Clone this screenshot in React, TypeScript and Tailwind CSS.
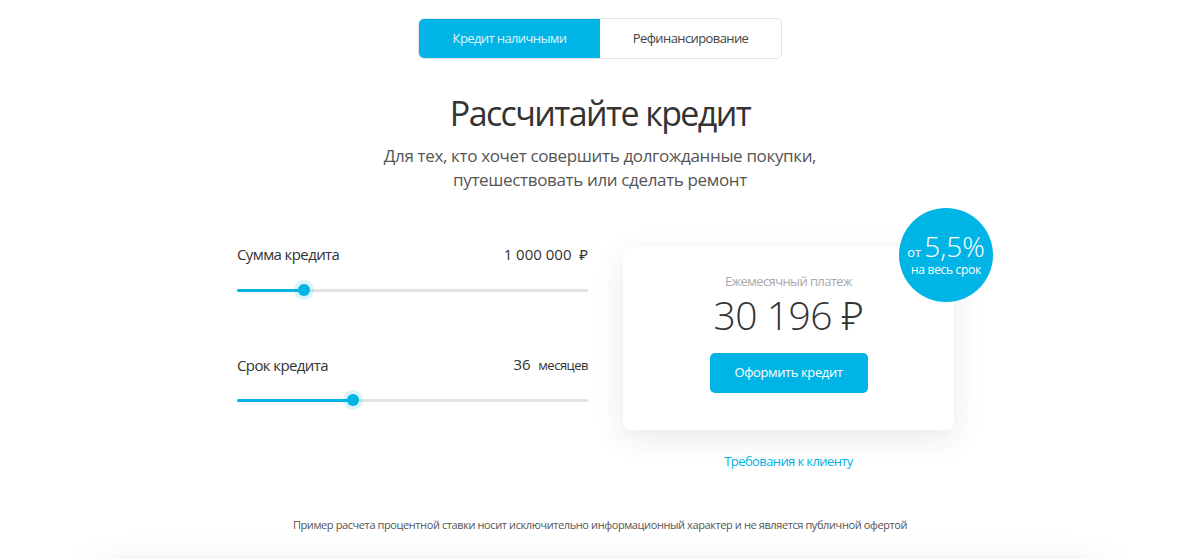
import { FC } from 'react';

const font = { fontFamily: '"Open Sans", "Noto Sans", sans-serif' };

interface SliderProps {
  percent: number;
}

const Slider: FC<SliderProps> = ({ percent }) => {
  return (
    <div className="relative h-5 w-full">
      <div className="absolute left-0 right-0 top-[9px] h-[3px] rounded-full bg-[#e2e2e2]" />
      <div
        className="absolute left-0 top-[9px] h-[3px] rounded-full bg-[#00b4e6]"
        style={{ width: `${percent}%` }}
      />
      <div
        className="absolute top-0 h-5 w-5 -translate-x-1/2 rounded-full bg-[#00b4e6]/15"
        style={{ left: `${percent}%` }}
      >
        <div className="absolute left-[4px] top-[4px] h-3 w-3 rounded-full bg-[#00b4e6]" />
      </div>
    </div>
  );
};

const App: FC = () => {
  return (
    <div className="w-full min-h-[559px] overflow-hidden bg-white text-[#333]" style={font}>
      <div className="flex flex-col items-center pt-[18px]">
        <div className="flex h-[41px] w-[364px] overflow-hidden rounded-md border border-[#e3e3e3]">
          <div className="flex flex-1 items-center justify-center bg-[#00b4e6] text-[13px] tracking-[-0.6px] text-white/85">
            Кредит наличными
          </div>
          <div className="flex flex-1 items-center justify-center bg-white text-[13px] tracking-[-0.6px] text-[#444]">
            Рефинансирование
          </div>
        </div>

        <h1 className="mt-[31px] text-[34px] leading-[46px] tracking-[-1.6px] text-[#333]">
          Рассчитайте кредит
        </h1>
        <p className="mt-[8px] text-center text-[17px] leading-[24px] tracking-[-0.35px] text-[#555]">
          Для тех, кто хочет совершить долгожданные покупки,
          <br />
          путешествовать или сделать ремонт
        </p>
      </div>

      <div className="mx-auto mt-[52px] flex w-[726px] gap-[35px]">
        <div className="w-[351px]">
          <div className="flex items-center justify-between leading-5">
            <span className="text-[15px] tracking-[-0.6px] text-[#333]">Сумма кредита</span>
            <span className="text-[15px] text-[#333]">1 000 000&nbsp; ₽</span>
          </div>
          <div className="mt-[16px]">
            <Slider percent={19} />
          </div>

          <div className="mt-[54px] flex items-center justify-between leading-5">
            <span className="text-[15px] tracking-[-0.6px] text-[#333]">Срок кредита</span>
            <span className="text-[15px] text-[#333]">
              36&nbsp; <span className="text-[13px] tracking-[-0.5px]">месяцев</span>
            </span>
          </div>
          <div className="mt-[15px]">
            <Slider percent={33} />
          </div>
        </div>

        <div className="flex w-[331px] flex-col items-center">
          <div className="relative mt-[3px] w-full rounded-lg bg-white pb-[37px] pt-[25px] shadow-[0_8px_30px_rgba(30,40,80,0.10)]">
            <div className="flex flex-col items-center">
              <span className="text-[13px] leading-[18px] tracking-[-0.6px] text-[#a9a9a9]">Ежемесячный платеж</span>
              <span className="mt-[1px] text-[39px] font-light leading-[48px] tracking-[-0.5px] text-[#333]">
                30 196 ₽
              </span>
              <button className="mt-[14px] h-10 w-[158px] rounded-[5px] bg-[#00b4e6] text-[13px] tracking-[-0.4px] text-white">
                Оформить кредит
              </button>
            </div>
            <div className="absolute left-[276px] top-[-39px] flex h-[94px] w-[94px] flex-col items-center justify-center rounded-full bg-[#00b4e6] text-white">
              <div className="flex items-baseline leading-none">
                <span className="mr-[3px] text-[13px]">от</span>
                <span className="text-[28px] font-light">5,5%</span>
              </div>
              <span className="mt-[2px] text-[12px] leading-4 tracking-[-0.3px]">на весь срок</span>
            </div>
          </div>
          <a className="mt-[21px] text-[13px] leading-5 tracking-[-0.6px] text-[#00b4e6]" href="#">
            Требования к клиенту
          </a>
        </div>
      </div>

      <p className="mt-[46px] text-center text-[11px] leading-4 tracking-[-0.4px] text-[#555]">
        Пример расчета процентной ставки носит исключительно информационный характер и не является публичной офертой
      </p>

      <div className="mx-auto mt-[36px] h-10 w-[1020px] rounded-2xl bg-white shadow-[0_0_40px_rgba(0,0,0,0.10)]" />
    </div>
  );
};

export default App;
